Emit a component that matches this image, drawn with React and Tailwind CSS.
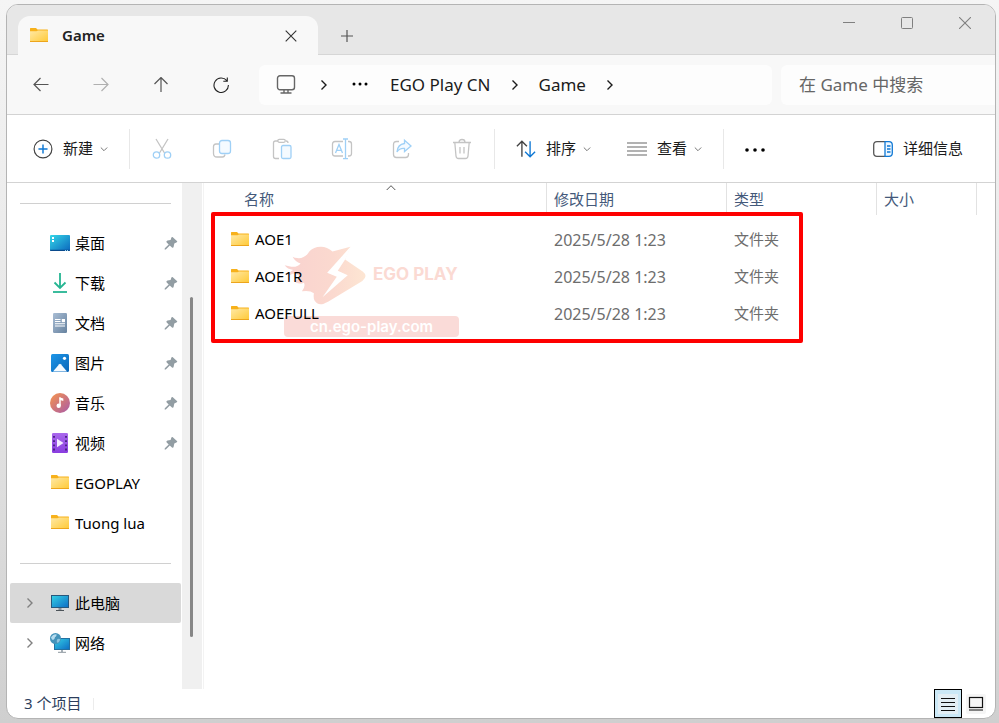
const Folder = () => (
  <svg className="h-[18px] w-[18px] shrink-0" viewBox="0 0 18 18">
    <defs>
      <linearGradient id="folder" x1="0" y1="0" x2="1" y2="1">
        <stop offset="0" stopColor="#ffe9a6" />
        <stop offset="1" stopColor="#ffc935" />
      </linearGradient>
    </defs>
    <path d="M0 1.600Q0 1 .6 1H6l1.500 1.500H17.400Q18 2.500 18 3.100V7H0Z" fill="#f7b11b" />
    <path d="M0 4.200H6.500L8 3.400H18V14.400Q18 15 17.400 15H.6Q0 15 0 14.400Z" fill="url(#folder)" />
    <path d="M0 14H18V14.400Q18 15 17.400 15H.6Q0 15 0 14.400Z" fill="#eda51c" />
  </svg>
)

const Desktop = () => (
  <svg className="h-5 w-5" viewBox="0 0 20 20">
    <defs>
      <linearGradient id="screen" x1="0" y1="0" x2="1" y2="1">
        <stop offset="0" stopColor="#35d8e8" />
        <stop offset="1" stopColor="#0b66bd" />
      </linearGradient>
    </defs>
    <rect y="2" width="20" height="16" rx="1" fill="url(#screen)" />
    <path d="M0 16.700H20V17Q20 18 19 18H1Q0 18 0 17Z" fill="#0a4a8c" />
    <path d="M2 4h2v2H2zM2 7h2v2H2z" fill="#fff" />
    <path d="M15 17.500h1M17 17.500h1" stroke="#9fd8f5" />
  </svg>
)

const Download = () => (
  <svg className="h-5 w-5" viewBox="0 0 20 20" fill="none" stroke="#25b592" strokeWidth="1.800">
    <path d="M10 0V15M4.500 9.500 10 15l5.500-5.500" />
    <path d="M3 19H17" />
  </svg>
)

const Document = () => (
  <svg className="h-5 w-5" viewBox="0 0 20 20">
    <defs>
      <linearGradient id="doc" x1="0" y1="0" x2="1" y2="1">
        <stop offset="0" stopColor="#a9bdd4" />
        <stop offset="1" stopColor="#66829f" />
      </linearGradient>
    </defs>
    <rect x="3" width="14" height="20" rx="1.200" fill="url(#doc)" />
    <path d="M5 6.500h5.500M5 8.500h5.500M5 10.800h10M5 13h10" stroke="#fff" strokeWidth="1.100" />
    <rect x="11.800" y="6" width="3.200" height="3.200" fill="#fff" />
  </svg>
)

const Picture = () => (
  <svg className="h-5 w-5" viewBox="0 0 20 20">
    <defs>
      <linearGradient id="pic" x1="0" y1="0" x2="1" y2="1">
        <stop offset="0" stopColor="#1d96e8" />
        <stop offset="1" stopColor="#0a66b8" />
      </linearGradient>
    </defs>
    <rect x="1" y="1" width="18" height="18" rx="1.500" fill="url(#pic)" />
    <path d="M3 18.500 9.200 11.200Q10 10.400 10.800 11.200L17 18.500Z" fill="#f4faff" />
    <circle cx="14.500" cy="5.300" r="1.600" fill="#fff" />
  </svg>
)

const Music = () => (
  <svg className="h-5 w-5" viewBox="0 0 20 20">
    <defs>
      <linearGradient id="music" x1="0" y1="0" x2="1" y2="1">
        <stop offset=".1" stopColor="#ef8f55" />
        <stop offset="1" stopColor="#a95aa8" />
      </linearGradient>
    </defs>
    <circle cx="10" cy="10" r="10" fill="url(#music)" />
    <path d="M10 4.500V12.500" stroke="#fff" strokeWidth="1.500" />
    <path d="M9.300 4.300 13.300 5.500V8L10 7Z" fill="#fff" />
    <circle cx="8.700" cy="12.800" r="2.200" fill="#fff" />
  </svg>
)

const Video = () => (
  <svg className="h-5 w-5" viewBox="0 0 20 20">
    <defs>
      <linearGradient id="video" x1="0" y1="0" x2="0" y2="1">
        <stop offset="0" stopColor="#a968ec" />
        <stop offset="1" stopColor="#8a3de0" />
      </linearGradient>
    </defs>
    <rect x="2" width="16" height="20" rx="1.200" fill="url(#video)" />
    <path d="M4 3V18M16 3V18" stroke="#43207c" strokeWidth="1.800" strokeDasharray="1.800 2.400" />
    <path d="M7 5.800 13.500 10 7 14.200Z" fill="#f3eaff" />
  </svg>
)

const Computer = () => (
  <svg className="h-5 w-5" viewBox="0 0 20 20">
    <defs>
      <linearGradient id="pc" x1="0" y1="0" x2="1" y2="1">
        <stop offset="0" stopColor="#35d2e6" />
        <stop offset="1" stopColor="#0d6cc4" />
      </linearGradient>
    </defs>
    <rect x="1.500" y="2.500" width="17" height="12" fill="url(#pc)" stroke="#27587c" />
    <path d="M10 15v2" stroke="#8a949c" strokeWidth="3" />
    <path d="M6 17.500H14" stroke="#4c5359" />
  </svg>
)

const Network = () => (
  <svg className="h-5 w-5" viewBox="0 0 20 20">
    <rect x="4.500" y="5.500" width="15" height="11" fill="url(#pc)" stroke="#2470a0" />
    <path d="M12 17v2" stroke="#a7b0b7" strokeWidth="2" />
    <path d="M8 19.300H16" stroke="#8d979e" />
    <circle cx="5.500" cy="5.500" r="5.500" fill="#4593ba" />
    <path d="M1 4.500Q3 1 6.500 1.200 7 3 5 4.200 4.800 6.500 3 7 1.500 6.500 1 4.500Z" fill="#b5dbee" />
    <path d="M7 6.500Q9 5 10.300 6.500 9.500 9 7.500 10 6.300 8.500 7 6.500Z" fill="#8cc3de" />
  </svg>
)

const Pin = () => (
  <svg className="h-[14px] w-[14px]" viewBox="0 0 14 14" fill="#929da3">
    <path d="M8.500 1 13.200 5.300Q13.500 6.300 12.300 6.500L10.300 7.500 9.700 10.500Q9.300 12.300 8 11.500L5.800 9.500 1.800 13.500 .6 13.400 .8 12.200 4.700 8.400 2.500 6.200Q1.900 5 3.500 4.500L6.600 4 7.400 1.500Q7.800.6 8.500 1Z" />
  </svg>
)

const ChevronRight = ({ className }) => (
  <svg className={className} viewBox="0 0 12 12" fill="none" stroke="currentColor" strokeWidth="1.400">
    <path d="M3.500 1.500 8 6 3.500 10.500" />
  </svg>
)

const ChevronDown = () => (
  <svg className="-ml-[3px] h-2 w-2" viewBox="0 0 8 8" fill="none" stroke="#777">
    <path d="M.8 2.500 4 5.700 7.200 2.500" />
  </svg>
)

const Stroke = ({ className = 'h-[22px] w-[22px]', color = '#444', children, ...rest }) => (
  <svg className={className} viewBox="0 0 22 22" fill="none" stroke={color} strokeWidth="1.300" {...rest}>
    {children}
  </svg>
)

const editTools = [
  {
    name: '剪切',
    icon: (
      <Stroke color="#c4c4c4">
        <path d="M5 1 13.500 15M17 1 8.500 15" />
        <circle cx="5.500" cy="17" r="3.200" stroke="#9fd0f6" />
        <circle cx="16.500" cy="17" r="3.200" stroke="#9fd0f6" />
      </Stroke>
    ),
  },
  {
    name: '复制',
    icon: (
      <Stroke color="#c4c4c4">
        <path d="M8 6H5Q2.500 6 2.500 8.500V15.500Q2.500 19 6 19H11.500Q13.500 19 14 16.500" />
        <rect x="8.500" y="2.500" width="11" height="13" rx="2.500" fill="#f4faff" stroke="#9fd0f6" />
      </Stroke>
    ),
  },
  {
    name: '粘贴',
    icon: (
      <Stroke color="#c4c4c4">
        <path d="M7 3H4.500Q2.500 3 2.500 5V18.500Q2.500 20.500 4.500 20.500H8M15 3Q17 3 17 5" />
        <rect x="6.800" y="1.300" width="7.500" height="3" rx="1.500" />
        <rect x="10.500" y="7.500" width="9.500" height="13" rx="1.500" fill="#f4faff" stroke="#9fd0f6" />
      </Stroke>
    ),
  },
  {
    name: '重命名',
    icon: (
      <Stroke color="#c4c4c4">
        <path d="M12 3.500H4Q1.500 3.500 1.500 6V15.500Q1.500 18 4 18H12M17 3.500H18Q20.500 3.500 20.500 6V15.500Q20.500 18 18 18H17" />
        <path d="M4.500 15 8 6.500 11.500 15M5.700 12.300H10.300M12 1H17M14.500 1V20.700M12 20.700H17" stroke="#9fd0f6" />
      </Stroke>
    ),
  },
  {
    name: '共享',
    icon: (
      <Stroke color="#c4c4c4">
        <path d="M8 3.500H5.500Q2.500 3.500 2.500 6.500V16.500Q2.500 19.500 5.500 19.500H14.500Q17.500 19.500 17.500 16.500V15" />
        <path d="M13.500 2.300 20 8 13.500 13.500V10.500Q8.500 10 6 14 6.500 6.500 13.500 5.500Z" fill="#f4faff" stroke="#9fd0f6" />
      </Stroke>
    ),
  },
  {
    name: '删除',
    icon: (
      <Stroke color="#c4c4c4">
        <path d="M2 4.500H20M8 4.200Q8 1.500 11 1.500T14 4.200M3.800 4.500 5 18Q5.200 20.500 7.500 20.500H14.500Q16.800 20.500 17 18L18.200 4.500M9 9V15.500M13 9V15.500" />
      </Stroke>
    ),
  },
]

const places = [
  { name: '桌面', icon: <Desktop />, pinned: true },
  { name: '下载', icon: <Download />, pinned: true },
  { name: '文档', icon: <Document />, pinned: true },
  { name: '图片', icon: <Picture />, pinned: true },
  { name: '音乐', icon: <Music />, pinned: true },
  { name: '视频', icon: <Video />, pinned: true },
  { name: 'EGOPLAY', icon: <Folder /> },
  { name: 'Tuong lua', icon: <Folder /> },
]

const files = [
  { name: 'AOE1', date: '2025/5/28 1:23', type: '文件夹' },
  { name: 'AOE1R', date: '2025/5/28 1:23', type: '文件夹' },
  { name: 'AOEFULL', date: '2025/5/28 1:23', type: '文件夹' },
]

const TitleBar = () => (
  <header className="flex h-[50px] items-end justify-between bg-[#e7e7e7] shadow-[inset_0_-1px_0_#d6d6d6]">
    <div className="flex items-end pl-[11px]">
      <div className="flex h-[39px] w-[300px] items-center rounded-t-xl bg-[#f8f8f8] pr-[17px] pl-3">
        <Folder />
        <span className="ml-[14px] flex-1 text-[15px] font-semibold text-[#222]">Game</span>
        <button aria-label="关闭标签页" className="flex h-5 w-5 items-center justify-center">
          <svg className="h-3 w-3" viewBox="0 0 12 12" stroke="#333" strokeWidth="1.100">
            <path d="M.7.700 11.300 11.300M11.300.700.7 11.300" />
          </svg>
        </button>
      </div>
      <button aria-label="新建标签页" className="flex h-[38px] w-[58px] items-center justify-center">
        <svg className="h-3 w-3" viewBox="0 0 12 12" stroke="#555">
          <path d="M6 0V12M0 6H12" strokeWidth="1.200" />
        </svg>
      </button>
    </div>
    <div className="flex h-full items-start pt-2 pr-px">
      <button aria-label="最小化" className="flex h-5 w-[58px] items-center justify-center">
        <svg className="h-3 w-3" viewBox="0 0 12 12" stroke="#808080">
          <path d="M0 5.500H12" />
        </svg>
      </button>
      <button aria-label="最大化" className="flex h-5 w-[58px] items-center justify-center">
        <svg className="h-3 w-3" viewBox="0 0 12 12" fill="none" stroke="#808080">
          <rect x=".5" y=".5" width="11" height="11" rx="1" />
        </svg>
      </button>
      <button aria-label="关闭" className="flex h-5 w-[58px] items-center justify-center">
        <svg className="h-3 w-3" viewBox="0 0 12 12" stroke="#808080" strokeWidth="1.100">
          <path d="M0 0 12 12M12 0 0 12" />
        </svg>
      </button>
    </div>
  </header>
)

const NavBar = () => (
  <div className="flex h-[60px] items-center border-b border-[#d3d3d3] bg-[#f8f8f8] pl-[14px]">
    <nav className="flex gap-5">
      <button aria-label="后退" className="flex h-10 w-10 items-center justify-center">
        <svg className="h-4 w-4" viewBox="0 0 16 16" fill="none" stroke="#555" strokeWidth="1.200">
          <path d="M15.500 7.500H1M7.500 1 1 7.500l6.500 6.500" />
        </svg>
      </button>
      <button aria-label="前进" className="flex h-10 w-10 items-center justify-center">
        <svg className="h-4 w-4" viewBox="0 0 16 16" fill="none" stroke="#b0b0b0" strokeWidth="1.200">
          <path d="M.5 7.500H15M8.500 1 15 7.500l-6.500 6.500" />
        </svg>
      </button>
      <button aria-label="向上" className="flex h-10 w-10 items-center justify-center">
        <svg className="h-4 w-4" viewBox="0 0 16 16" fill="none" stroke="#555" strokeWidth="1.200">
          <path d="M8 15V.500M1.500 7 8 .500 14.500 7" />
        </svg>
      </button>
      <button aria-label="刷新" className="flex h-10 w-10 items-center justify-center">
        <svg className="h-4 w-4" viewBox="0 0 16 16" fill="none" stroke="#222" strokeWidth="1.100">
          <path d="M13.800 3.700A7.200 7.200 0 1 0 15.400 8M14.300.500V4.200H10.300" />
        </svg>
      </button>
    </nav>
    <div className="ml-[18px] flex h-10 flex-1 items-center gap-[22px] rounded-md bg-[#fdfdfd] pl-[17px] text-[17px] text-[#1b1b1b]">
      <button aria-label="此电脑">
        <svg className="h-5 w-5" viewBox="0 0 20 20" fill="none" stroke="#666" strokeWidth="1.400">
          <rect x="1.500" y=".700" width="17" height="14" rx="2.500" />
          <path d="M8 15v3M12 15v3M4.500 18H15.500" />
        </svg>
      </button>
      <ChevronRight className="h-3 w-3" />
      <button aria-label="更多路径">
        <svg className="h-4 w-4" viewBox="0 0 16 16">
          <circle cx="2" cy="7" r="1.500" />
          <circle cx="8" cy="7" r="1.500" />
          <circle cx="14" cy="7" r="1.500" />
        </svg>
      </button>
      <div className="flex items-center gap-[18px]">
        <button>EGO Play CN</button>
        <ChevronRight className="h-3 w-3" />
        <button>Game</button>
        <ChevronRight className="h-3 w-3" />
      </div>
    </div>
    <input
      type="text"
      aria-label="搜索"
      placeholder="在 Game 中搜索"
      className="ml-[9px] h-10 w-[214px] rounded-l-md bg-[#fdfdfd] pl-[18px] text-[17px] placeholder:text-[#666]"
    />
  </div>
)

const Separator = () => <div className="mx-[21px] h-10 w-px bg-[#e8e8e8]" />

const Toolbar = () => (
  <div className="flex h-[68px] items-center border-b border-[#d3d3d3] pr-8 pl-[26px] text-[15px] text-[#1b1b1b]">
    <button className="flex items-center gap-[10px]">
      <Stroke className="h-5 w-5">
        <circle cx="11" cy="11" r="9.800" />
        <path d="M11 6V16M6 11H16" stroke="#0f78d4" strokeWidth="1.600" />
      </Stroke>
      新建
      <ChevronDown />
    </button>
    <Separator />
    <div className="flex gap-[38px]">
      {editTools.map((tool) => (
        <button key={tool.name} aria-label={tool.name}>
          {tool.icon}
        </button>
      ))}
    </div>
    <Separator />
    <button className="flex items-center gap-[10px]">
      <Stroke className="h-5 w-5" strokeWidth="1.500">
        <path d="M6.500 19.500V2.500M1 8 6.500 2.500 12 8" />
        <path d="M15.500 2.500V19.500M10 14l5.500 5.500L21 14" stroke="#0f78d4" />
      </Stroke>
      排序
      <ChevronDown />
    </button>
    <button className="ml-9 flex items-center gap-[10px]">
      <svg className="h-5 w-5" viewBox="0 0 20 20" stroke="#666" strokeWidth="1.200">
        <path d="M0 4H20M0 8H20M0 12H20M0 16H20" />
      </svg>
      查看
      <ChevronDown />
    </button>
    <Separator />
    <button aria-label="查看更多">
      <svg className="h-5 w-5" viewBox="0 0 20 20">
        <circle cx="2" cy="11" r="1.800" />
        <circle cx="10" cy="11" r="1.800" />
        <circle cx="18" cy="11" r="1.800" />
      </svg>
    </button>
    <button className="ml-auto flex items-center gap-[10px]">
      <svg className="h-5 w-5" viewBox="0 0 20 20" fill="none" strokeWidth="1.300">
        <path d="M12 2.700H4Q.7 2.700.7 6V14Q.7 17.300 4 17.300H12" stroke="#555" />
        <path d="M12 2.700H16Q19.300 2.700 19.300 6V14Q19.300 17.300 16 17.300H12Z" fill="#eef7ff" stroke="#0f78d4" />
        <path d="M14 7H17.500M14 10H17.500M14 13H17.500" stroke="#0f78d4" />
      </svg>
      详细信息
    </button>
  </div>
)

const SideItem = ({ icon, name, pinned, expandable, selected }) => (
  <li>
    <button
      className={
        'mr-px ml-[3px] flex h-10 w-[171px] items-center rounded-xs text-[15px] text-black ' +
        (selected ? 'bg-[#d9d9d9]' : '')
      }
    >
      <span className="flex w-10 justify-center text-[#808080]">
        {expandable && <ChevronRight className="h-3 w-3" />}
      </span>
      <span className="flex w-5 justify-center">{icon}</span>
      <span className="ml-[5px] flex-1 text-left">{name}</span>
      {pinned && (
        <span className="mr-[3px]">
          <Pin />
        </span>
      )}
    </button>
  </li>
)

const Divider = () => (
  <div className="flex h-10 items-center pr-[11px] pl-[13px]">
    <hr className="w-full border-[#d0d0d0]" />
  </div>
)

const Sidebar = () => (
  <aside className="flex">
    <div className="w-[175px]">
      <Divider />
      <ul>
        {places.map((place) => (
          <SideItem key={place.name} {...place} />
        ))}
      </ul>
      <Divider />
      <ul>
        <SideItem icon={<Computer />} name="此电脑" expandable selected />
        <SideItem icon={<Network />} name="网络" expandable />
      </ul>
    </div>
    <div className="w-5 bg-[#f0f0f0] pt-[114px] pl-2">
      <div className="h-[340px] w-[3px] rounded-full bg-[#868686]" />
    </div>
  </aside>
)

const Watermark = () => (
  <div className="absolute top-[62px] left-20 flex w-[175px] flex-col gap-[11px] font-['Inter',sans-serif]">
    <div className="flex items-center gap-[6px]">
      <svg className="h-[60px] w-[83px] shrink-0" viewBox="240 105 250 180">
        <defs>
          <linearGradient id="flame" x1="0" y1="0" x2="1" y2="0">
            <stop offset="0" stopColor="#f9d2cf" />
            <stop offset=".6" stopColor="#fbd9cf" />
            <stop offset="1" stopColor="#fde6d3" />
          </linearGradient>
        </defs>
        <path
          d="M440 110 386 124Q366 106 340 111 322 115 312 130 300 146 280 144 272 144 266 140 274 156 290 160 280 172 262 170L242 166Q250 178 268 180 254 186 258 196 266 188 278 192 290 198 284 206 276 214 268 210 280 226 300 218 306 228 294 244 318 240 330 250 328 264 332 272 340 286 358 282L374 275 476 213Q494 198 478 185L424 148Z"
          fill="url(#flame)"
        />
        <path d="M442 108 370 188 399 200 356 262 432 196 402 182 428 142Z" fill="#fff" />
      </svg>
      <span className="text-[17px] font-bold whitespace-nowrap text-[#fbdad3]">EGO PLAY</span>
    </div>
    <div className="rounded bg-[#fadbd8] text-center text-[15px] leading-[21px] font-semibold text-white">
      cn.ego-play.com
    </div>
  </div>
)

const FileList = () => (
  <main className="relative ml-px flex-1 border-l border-[#f3f3f3] pl-px">
    <Watermark />
    <table className="relative w-full table-fixed border-separate border-spacing-0 text-left text-[15px]">
      <colgroup>
        <col className="w-[342px]" />
        <col className="w-[180px]" />
        <col className="w-[150px]" />
        <col className="w-[100px]" />
        <col />
      </colgroup>
      <thead className="text-[#44597a]">
        <tr className="h-8">
          <th className="border-r border-[#e2e2e2] p-0 pl-[31px] font-normal">
            <div className="relative pl-2">
              名称
              <svg
                className="absolute -top-1 left-1/2 h-2 w-[10px] -translate-x-1/2"
                viewBox="0 0 10 8"
                fill="none"
                stroke="#555"
              >
                <path d="M.7 6 5 1.700 9.300 6" />
              </svg>
            </div>
          </th>
          <th className="border-r border-[#e2e2e2] p-0 pl-[7px] font-normal">修改日期</th>
          <th className="border-r border-[#e2e2e2] p-0 pl-[7px] font-normal">类型</th>
          <th className="border-r border-[#e2e2e2] p-0 pl-[7px] font-normal">大小</th>
          <td />
        </tr>
      </thead>
      <tbody className="text-[#6d6d6d] before:block before:h-[6px]">
        {files.map((file) => (
          <tr key={file.name} className="h-[37px]">
            <td className="p-0 pl-[26px]">
              <div className="flex items-center gap-[6px] text-black">
                <Folder />
                {file.name}
              </div>
            </td>
            <td className="p-0 pl-[7px] text-[16px]">{file.date}</td>
            <td className="p-0 pl-[7px]">{file.type}</td>
            <td />
            <td />
          </tr>
        ))}
      </tbody>
    </table>
    <div className="absolute top-[29px] left-[7px] h-[131px] w-[592px] rounded-xs border-4 border-[#fe0000]" />
  </main>
)

const StatusBar = () => (
  <footer className="flex h-[29px] items-center justify-between pr-[9px] pl-[17px] text-[15px] text-[#2c3e5c]">
    <div className="flex items-center gap-3">
      3 个项目
      <span className="h-3 w-px bg-[#ececec]" />
    </div>
    <div className="flex h-full items-center gap-1">
      <button
        aria-label="详细信息视图"
        className="flex h-[29px] w-7 items-center justify-center border border-black bg-[#cbe8f6]"
      >
        <svg className="h-5 w-5 bg-[#e3eef4]" viewBox="0 0 20 20" stroke="#111" strokeWidth="1.200">
          <path d="M3 4.500H17M3 8.500H17M3 12.500H17M3 16.500H17" />
        </svg>
      </button>
      <button aria-label="大图标视图">
        <svg className="h-5 w-5 rounded-xs bg-[#f5f5f5]" viewBox="0 0 20 20" fill="none" stroke="#111" strokeWidth="1.200">
          <rect x="3.500" y="3.500" width="13" height="10" />
          <path d="M3 16H17" />
        </svg>
      </button>
    </div>
  </footer>
)

export default function App() {
  return (
    <div className="flex min-h-screen w-full bg-linear-to-b from-[#f5f5f5] via-[#e6e6e6] to-[#cfcfcf] pt-1 pr-[3px] pb-1 pl-[6px] font-['Noto_Sans','Noto_Sans_CJK_SC',sans-serif]">
      <div className="flex flex-1 flex-col overflow-hidden rounded-xl border border-[#b4b4b4] bg-white">
        <TitleBar />
        <NavBar />
        <Toolbar />
        <div className="flex flex-1">
          <Sidebar />
          <FileList />
        </div>
        <StatusBar />
      </div>
    </div>
  )
}
